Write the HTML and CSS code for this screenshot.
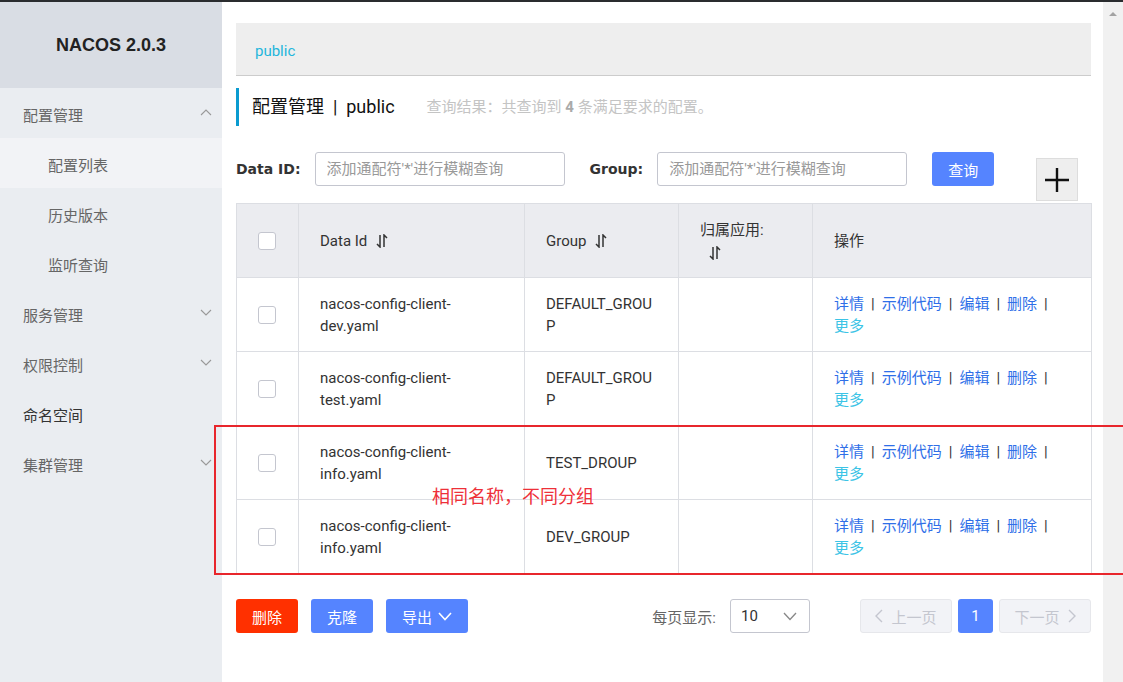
FILE: index.html
```html
<!DOCTYPE html>
<html lang="zh-CN">
<head>
<meta charset="utf-8">
<title>NACOS 2.0.3</title>
<link rel="stylesheet" href="styles.css">
</head>
<body>
<div class="topline"></div>
<div class="app">
  <aside class="sidebar">
    <div class="brand">NACOS 2.0.3</div>
    <div class="menu-item"><span>配置管理</span><svg class="chev" width="12" height="7" viewBox="0 0 12 7"><path d="M1 6 L6 1 L11 6" fill="none" stroke="#999" stroke-width="1.1"/></svg></div>
    <div class="menu-item sub active"><span>配置列表</span></div>
    <div class="menu-item sub"><span>历史版本</span></div>
    <div class="menu-item sub"><span>监听查询</span></div>
    <div class="menu-item"><span>服务管理</span><svg class="chev" width="12" height="7" viewBox="0 0 12 7"><path d="M1 1 L6 6 L11 1" fill="none" stroke="#999" stroke-width="1.1"/></svg></div>
    <div class="menu-item"><span>权限控制</span><svg class="chev" width="12" height="7" viewBox="0 0 12 7"><path d="M1 1 L6 6 L11 1" fill="none" stroke="#999" stroke-width="1.1"/></svg></div>
    <div class="menu-item plain"><span>命名空间</span></div>
    <div class="menu-item"><span>集群管理</span><svg class="chev" width="12" height="7" viewBox="0 0 12 7"><path d="M1 1 L6 6 L11 1" fill="none" stroke="#999" stroke-width="1.1"/></svg></div>
  </aside>

  <main class="main">
    <div class="breadcrumb"><span class="ns">public</span></div>

    <div class="title-bar">
      <span class="title">配置管理 &nbsp;|&nbsp; public</span>
      <span class="result">查询结果：共查询到 <b>4</b> 条满足要求的配置。</span>
    </div>

    <div class="search-row">
      <label class="lbl">Data ID:</label>
      <input class="inp" type="text" placeholder="添加通配符'*'进行模糊查询">
      <label class="lbl lbl-group">Group:</label>
      <input class="inp" type="text" placeholder="添加通配符'*'进行模糊查询">
      <button class="btn btn-primary btn-query">查询</button>
      <button class="btn-plus" aria-label="add"><svg width="26" height="26" viewBox="0 0 26 26"><path d="M13 1 V25 M1 13 H25" stroke="#111" stroke-width="2.4"/></svg></button>
    </div>

    <table class="grid">
      <colgroup>
        <col class="c-check"><col class="c-id"><col class="c-group"><col class="c-app"><col class="c-ops">
      </colgroup>
      <thead>
        <tr>
          <th class="cb-cell"><span class="cb"></span></th>
          <th><span class="th-in">Data Id <svg class="sort" width="12" height="14" viewBox="0 0 12 14"><path d="M4 1 V13 L1 10 M8 13 V1 L11 4" fill="none" stroke="#333" stroke-width="1.5"/></svg></span></th>
          <th><span class="th-in">Group <svg class="sort" width="12" height="14" viewBox="0 0 12 14"><path d="M4 1 V13 L1 10 M8 13 V1 L11 4" fill="none" stroke="#333" stroke-width="1.5"/></svg></span></th>
          <th class="th-app">归属应用:<br><svg class="sort sort-app" width="12" height="14" viewBox="0 0 12 14"><path d="M4 1 V13 L1 10 M8 13 V1 L11 4" fill="none" stroke="#333" stroke-width="1.5"/></svg></th>
          <th>操作</th>
        </tr>
      </thead>
      <tbody>
        <tr>
          <td class="cb-cell"><span class="cb"></span></td>
          <td>nacos-config-client-<br>dev.yaml</td>
          <td>DEFAULT_GROU<br>P</td>
          <td></td>
          <td class="ops"><a class="lk">详情</a><span class="sep">|</span><a class="lk">示例代码</a><span class="sep">|</span><a class="lk">编辑</a><span class="sep">|</span><a class="lk">删除</a><span class="sep">|</span><br><a class="more">更多</a></td>
        </tr>
        <tr>
          <td class="cb-cell"><span class="cb"></span></td>
          <td>nacos-config-client-<br>test.yaml</td>
          <td>DEFAULT_GROU<br>P</td>
          <td></td>
          <td class="ops"><a class="lk">详情</a><span class="sep">|</span><a class="lk">示例代码</a><span class="sep">|</span><a class="lk">编辑</a><span class="sep">|</span><a class="lk">删除</a><span class="sep">|</span><br><a class="more">更多</a></td>
        </tr>
        <tr>
          <td class="cb-cell"><span class="cb"></span></td>
          <td>nacos-config-client-<br>info.yaml</td>
          <td>TEST_DROUP</td>
          <td></td>
          <td class="ops"><a class="lk">详情</a><span class="sep">|</span><a class="lk">示例代码</a><span class="sep">|</span><a class="lk">编辑</a><span class="sep">|</span><a class="lk">删除</a><span class="sep">|</span><br><a class="more">更多</a></td>
        </tr>
        <tr>
          <td class="cb-cell"><span class="cb"></span></td>
          <td>nacos-config-client-<br>info.yaml</td>
          <td>DEV_GROUP</td>
          <td></td>
          <td class="ops"><a class="lk">详情</a><span class="sep">|</span><a class="lk">示例代码</a><span class="sep">|</span><a class="lk">编辑</a><span class="sep">|</span><a class="lk">删除</a><span class="sep">|</span><br><a class="more">更多</a></td>
        </tr>
      </tbody>
    </table>

    <div class="footer-row">
      <button class="btn btn-danger">删除</button>
      <button class="btn btn-primary">克隆</button>
      <button class="btn btn-primary btn-export">导出 <svg width="14" height="9" viewBox="0 0 14 9"><path d="M1 1 L7 7.5 L13 1" fill="none" stroke="#fff" stroke-width="1.6"/></svg></button>
      <span class="spacer"></span>
      <span class="pagesize-lbl">每页显示:</span>
      <div class="select"><span>10</span><svg width="14" height="9" viewBox="0 0 14 9"><path d="M1 1 L7 7.5 L13 1" fill="none" stroke="#888" stroke-width="1.3"/></svg></div>
      <div class="pager">
        <span class="pg pg-dis"><svg width="8" height="14" viewBox="0 0 8 14"><path d="M7 1 L1 7 L7 13" fill="none" stroke="#c4c6cf" stroke-width="1.4"/></svg>上一页</span>
        <span class="pg pg-cur">1</span>
        <span class="pg pg-dis">下一页<svg width="8" height="14" viewBox="0 0 8 14"><path d="M1 1 L7 7 L1 13" fill="none" stroke="#c4c6cf" stroke-width="1.4"/></svg></span>
      </div>
    </div>
  </main>

  <div class="scrollbar"><svg width="20" height="14" viewBox="0 0 20 14"><path d="M6 10 L10 6 L14 10 Z" fill="#a3a3a3"/></svg></div>
</div>

<div class="annot-box"></div>
<div class="annot-text">相同名称，不同分组</div>
</body>
</html>
```

FILE: styles.css
```css
* { box-sizing: border-box; }

body {
  margin: 0;
  font-family: Roboto, "Noto Sans CJK SC", sans-serif;
  font-size: 15px;
  color: #333;
  background: #fff;
  overflow: hidden;
}

.topline { height: 2px; background: #2a2c2f; }

.app { display: flex; height: 680px; }

/* sidebar */
.sidebar { width: 222px; flex: none; background: #eaedf1; }
.brand {
  height: 86px;
  display: flex; align-items: center; justify-content: center;
  font: bold 18px "Liberation Sans", Arial, sans-serif;
  color: #222;
}
.sidebar .brand { background: #d9dde4; }
.menu-item {
  height: 50px;
  display: flex; align-items: center; justify-content: space-between;
  padding: 2px 10px 0 23px;
  color: #666;
  font-size: 15px;
}
.menu-item.sub { padding-left: 48px; }
.menu-item.active { background: #f2f3f6; }
.menu-item.plain { color: #333; }
.chev { margin-top: -4px; }

/* main */
.main { flex: 1; min-width: 0; padding: 21px 12px 0 14px; }

.breadcrumb {
  height: 53px;
  background: #eee;
  border-bottom: 1px solid #ccc;
  display: flex; align-items: center;
  padding: 4px 0 0 19px;
}
.ns { color: #1fb6dc; font-size: 15px; }

.title-bar {
  margin-top: 12px;
  height: 38px;
  border-left: 3px solid #0a9bd0;
  display: flex; align-items: center;
  padding: 0 0 4px 13px;
}
.title { font-size: 18px; color: #111; }
.result { margin-left: 32px; color: #c4c4c4; font-size: 15px; }
.result b { color: #aaa; }

.search-row {
  margin-top: 26px;
  display: flex; align-items: flex-start;
  height: 48px;
}
.lbl {
  height: 34px;
  font: bold 14px "DejaVu Sans", Verdana, sans-serif;
  line-height: 34px;
  color: #333;
  margin-right: 14px;
}
.lbl-group { margin-left: 25px; margin-right: 14px; }
.inp {
  width: 250px; height: 34px;
  border: 1px solid #c4c6cf; border-radius: 3px;
  padding: 0 11px;
  font: 15px Roboto, "Noto Sans CJK SC", sans-serif;
  color: #333;
  outline: none;
}
.inp::placeholder { color: #999; }

.btn {
  height: 34px;
  border: none; border-radius: 3px;
  color: #fff;
  font: 15px Roboto, "Noto Sans CJK SC", sans-serif;
  padding: 0 16px;
  display: inline-flex; align-items: center; justify-content: center; gap: 6px;
}
.btn-primary { background: #5584ff; }
.btn-danger { background: #ff3000; }
.btn-query { margin-left: 25px; width: 62px; }
.btn-plus {
  margin-left: auto; margin-right: 13px; margin-top: 6px;
  width: 42px; height: 43px;
  background: #eee; border: 1px solid #ddd;
  display: flex; align-items: center; justify-content: center;
  padding: 0;
}

/* table */
.grid {
  margin-top: 3px;
  width: 855px;
  border-collapse: collapse;
  table-layout: fixed;
  border: 1px solid #dcdee3;
}
.c-check { width: 62px; }
.c-id { width: 226px; }
.c-group { width: 154px; }
.c-app { width: 134px; }
.c-ops { width: 279px; }

.grid th, .grid td {
  border: 1px solid #dcdee3;
  text-align: left;
  vertical-align: middle;
  padding: 0 6px 0 21px;
  font-weight: normal;
  line-height: 22px;
  white-space: nowrap;
}
.grid thead th { background: #ebecf0; height: 74px; }
.grid tbody td { height: 74px; }
.grid th.cb-cell, .grid td.cb-cell { padding: 0 0 0 21px; }
.th-in { display: inline-flex; align-items: center; gap: 9px; }
.th-app { padding-top: 0; }
.sort-app { margin-left: 9px; vertical-align: middle; }

.cb {
  display: block;
  width: 18px; height: 18px;
  border: 1px solid #c4c6cf; border-radius: 3px;
  background: #fff;
}

.ops { color: #333; }
.lk { color: #2f6fe8; }
.more { color: #3cc4e6; }
.sep { margin: 0 7px; color: #333; }

/* footer */
.footer-row {
  margin-top: 25px;
  display: flex; align-items: center;
  gap: 13px;
}
.footer-row .btn { width: 62px; }
.footer-row .btn-export { width: 82px; padding: 0 10px; }
.spacer { flex: 1; }
.pagesize-lbl { color: #666; margin-right: 1px; }
.select {
  width: 80px; height: 34px;
  border: 1px solid #c4c6cf; border-radius: 3px;
  display: flex; align-items: center; justify-content: space-between;
  padding: 0 12px 0 10px;
  color: #333;
}
.pager { display: flex; gap: 6px; margin-left: 37px; }
.pg {
  height: 34px;
  border-radius: 3px;
  display: inline-flex; align-items: center; justify-content: center; gap: 8px;
}
.pg-dis {
  width: 92px;
  background: #f2f3f7; border: 1px solid #e6e7eb;
  color: #c4c6cf;
}
.pg-cur { width: 35px; background: #5584ff; color: #fff; }

/* scrollbar look */
.scrollbar { width: 20px; flex: none; background: #f1f1f1; padding-top: 4px; }

/* annotation overlay */
.annot-box {
  position: absolute;
  left: 214px; top: 425px;
  width: 920px; height: 150px;
  border: 2px solid #e8262c;
  pointer-events: none;
}
.annot-text {
  position: absolute;
  left: 432px; top: 482px;
  font: 18px "Noto Sans CJK SC", sans-serif;
  line-height: 26px;
  color: #ee3039;
}
```
